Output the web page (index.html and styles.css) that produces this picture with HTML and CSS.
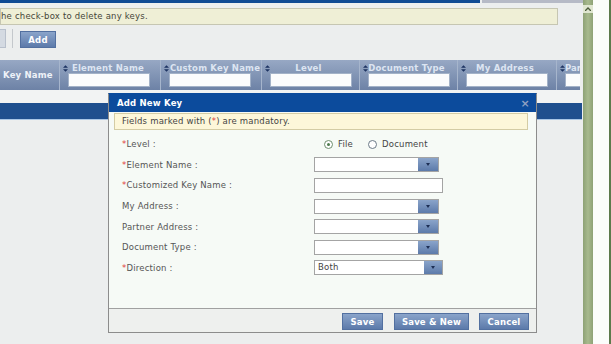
FILE: index.html
```html
<!DOCTYPE html>
<html lang="en">
<head>
    <meta charset="UTF-8">
    <meta name="viewport" content="width=device-width, initial-scale=1.0">
    <title>Keys</title>
    <link rel="stylesheet" href="styles.css">
</head>
<body>
    <div class="screen">
        <div class="main">
            <div class="topbar">
                <div class="topbar-blue"></div>
                <div class="topbar-gray"></div>
            </div>

            <div class="notice">he check-box to delete any keys.</div>

            <div class="toolbar">
                <span class="search-stub"></span>
                <span class="sep"></span>
                <button class="btn btn-add">Add</button>
            </div>

            <div class="grid-head">
                <div class="col col-key">Key Name</div>
                <div class="col w101">
                    <div class="col-title"><svg class="sort" viewBox="0 0 6 8"><path d="M3 0L6 3H0z M3 8L0 5H6z"/></svg><span>Element Name</span></div>
                    <input class="filter">
                </div>
                <div class="col w101">
                    <div class="col-title"><svg class="sort" viewBox="0 0 6 8"><path d="M3 0L6 3H0z M3 8L0 5H6z"/></svg><span class="tight">Custom Key Name</span></div>
                    <input class="filter">
                </div>
                <div class="col w98">
                    <div class="col-title"><svg class="sort" viewBox="0 0 6 8"><path d="M3 0L6 3H0z M3 8L0 5H6z"/></svg><span>Level</span></div>
                    <input class="filter">
                </div>
                <div class="col w98">
                    <div class="col-title"><svg class="sort" viewBox="0 0 6 8"><path d="M3 0L6 3H0z M3 8L0 5H6z"/></svg><span>Document Type</span></div>
                    <input class="filter">
                </div>
                <div class="col w99">
                    <div class="col-title"><svg class="sort" viewBox="0 0 6 8"><path d="M3 0L6 3H0z M3 8L0 5H6z"/></svg><span>My Address</span></div>
                    <input class="filter">
                </div>
                <div class="col col-last">
                    <div class="col-title"><svg class="sort" viewBox="0 0 6 8"><path d="M3 0L6 3H0z M3 8L0 5H6z"/></svg><span class="left">Par</span></div>
                    <input class="filter">
                </div>
            </div>

            <div class="grid-row"></div>
            <div class="grid-row selected"></div>
        </div>

        <div class="vscroll">
            <span class="arrow"><svg viewBox="0 0 6 4"><path d="M0 4L3 1L6 4" fill="none" stroke="#4a5a3a" stroke-width="1.4"/></svg></span>
        </div>
        <div class="gutter"></div>
        <div class="edge"></div>
    </div>

    <div class="modal">
        <div class="modal-head">
            <span>Add New Key</span>
            <span class="close">&#215;</span>
        </div>
        <div class="modal-note">Fields marked with (<span class="req">*</span>) are mandatory.</div>

        <div class="form">
            <label><span class="req">*</span>Level :</label>
            <div class="radios">
                <span class="radio checked"></span><span class="radio-text">File</span>
                <span class="radio second"></span><span class="radio-text">Document</span>
            </div>

            <label><span class="req">*</span>Element Name :</label>
            <div class="select"><span class="select-value"></span><span class="select-btn"></span></div>

            <label><span class="req">*</span>Customized Key Name :</label>
            <input class="text-input">

            <label>My Address :</label>
            <div class="select"><span class="select-value"></span><span class="select-btn"></span></div>

            <label>Partner Address :</label>
            <div class="select"><span class="select-value"></span><span class="select-btn"></span></div>

            <label>Document Type :</label>
            <div class="select"><span class="select-value"></span><span class="select-btn"></span></div>

            <label><span class="req">*</span>Direction :</label>
            <div class="select select-wide"><span class="select-value">Both</span><span class="select-btn"></span></div>
        </div>

        <div class="modal-foot">
            <button class="btn btn-save">Save</button>
            <button class="btn btn-savenew">Save &amp; New</button>
            <button class="btn btn-cancel">Cancel</button>
        </div>
    </div>
</body>
</html>
```

FILE: styles.css
```css
* {
    box-sizing: border-box;
}

body {
    margin: 0;
    font-family: "DejaVu Sans", Verdana, sans-serif;
    font-size: 8.5px;
    letter-spacing: 0.2px;
    color: #444;
    background: #eceeee;
    overflow: hidden;
}

.screen {
    display: flex;
    height: 344px;
}

.main {
    width: 583px;
}

.topbar {
    display: flex;
    gap: 2px;
    height: 3px;
}

.topbar-blue {
    width: 480px;
    background: #0f4a94;
}

.topbar-gray {
    flex: 1;
    background: #b6bac6;
}

.notice {
    margin-top: 5px;
    width: 558px;
    height: 17px;
    border: 1px solid #c6c6b2;
    background: #efefd6;
    line-height: 15px;
    color: #46463a;
    white-space: nowrap;
}

.toolbar {
    display: flex;
    height: 19px;
    margin-top: 4px;
}

.search-stub {
    width: 6px;
    background: #d4dae2;
    border: 1px solid #b8c0cc;
    border-left: none;
}

.sep {
    width: 1px;
    margin-left: 6px;
    background: #c4c8cc;
}

.btn {
    height: 17px;
    padding: 0;
    border: 1px solid #5270a0;
    background: linear-gradient(#8aa4ca, #5c7aaa);
    color: #fff;
    font-family: "DejaVu Sans", Verdana, sans-serif;
    font-size: 8.5px;
    letter-spacing: 0.2px;
    font-weight: bold;
}

.btn-add {
    width: 36px;
    margin: 2px 0 0 7px;
}

.grid-head {
    display: flex;
    width: 580px;
    height: 30px;
    margin-top: 12px;
    background: linear-gradient(#97a8c4, #6d82a6);
    overflow: hidden;
}

.col {
    flex: none;
    height: 30px;
    padding-top: 3px;
    border-left: 1px solid #a6b5cc;
    color: #dde5f2;
    font-weight: bold;
}

.col-key {
    width: 59px;
    border-left: none;
    display: flex;
    align-items: center;
    padding: 0 0 0 3px;
    color: #eef2f8;
}

.w101 { width: 101px; }
.w98 { width: 98px; }
.w99 { width: 99px; }
.col-last { flex: 1; }

.col-title {
    display: flex;
    align-items: center;
    height: 10px;
    line-height: 10px;
}

.col-title span {
    flex: 1;
    padding-right: 12px;
    text-align: center;
    white-space: nowrap;
    overflow: hidden;
}

.col-title span.tight {
    padding-right: 0;
    overflow: visible;
}

.col-title span.left {
    text-align: left;
    padding: 0;
    letter-spacing: 0;
}

.sort {
    flex: none;
    width: 5px;
    height: 7px;
    margin-left: 3px;
    fill: #1d3362;
}

.filter {
    display: block;
    width: 82px;
    height: 14px;
    margin-left: 8px;
    border: 1px solid #a3b2c8;
    background: #fbfcfd;
}

.grid-row {
    width: 582px;
    height: 13px;
    background: #f2f3f3;
}

.grid-row.selected {
    height: 17px;
    background: #1f4f8e;
    border-bottom: 1px solid #a9c6e6;
}

.vscroll {
    width: 10px;
    padding-top: 5px;
    background: linear-gradient(90deg, #8ea276, #a8ba8e 50%, #8ea276);
}

.arrow {
    display: flex;
    justify-content: center;
    align-items: center;
    height: 8px;
    background: #dfe6d0;
}

.arrow svg {
    width: 6px;
    height: 4px;
}

.gutter {
    width: 16px;
    background: #fbfdfb;
}

.edge {
    flex: 1;
    background: #5c7a4c;
}

/* dialog */
.modal {
    position: absolute;
    left: 108px;
    top: 93px;
    width: 429px;
    height: 240px;
    display: flex;
    flex-direction: column;
    border: 1px solid #8c8c8c;
    border-top-color: #0c4b9c;
    background: #f6faf6;
}

.modal-head {
    display: flex;
    justify-content: space-between;
    align-items: center;
    height: 18px;
    padding: 0 6px 0 8px;
    background: #0c4b9c;
    color: #fff;
    font-weight: bold;
}

.close {
    color: #8fa0c2;
    font-size: 11px;
    font-weight: bold;
}

.modal-note {
    height: 17px;
    margin: 1px 8px 0 5px;
    padding-left: 7px;
    border: 1px solid #d4cca4;
    background: #fdf7d9;
    line-height: 15px;
    color: #444;
}

.req {
    color: #e03c3c;
}

.form {
    display: grid;
    grid-template-columns: 192px 1fr;
    grid-auto-rows: 20.6px;
    align-items: center;
    margin-top: 4px;
    padding-left: 13px;
}

.form label {
    color: #555;
}

.radios {
    display: flex;
    align-items: center;
    padding-left: 10px;
}

.radio {
    width: 9px;
    height: 9px;
    border: 1px solid #6c7a88;
    border-radius: 50%;
    background: #fff;
}

.radio.checked {
    border-color: #6e8e6e;
    display: flex;
    align-items: center;
    justify-content: center;
}

.radio.checked::after {
    content: "";
    width: 3px;
    height: 3px;
    border-radius: 50%;
    background: #4e7a4e;
}

.radio.second {
    margin-left: 15px;
}

.radio-text {
    margin-left: 5px;
    color: #444;
}

.select {
    display: flex;
    width: 125px;
    height: 15px;
    border: 1px solid #a4a4a4;
    background: #fff;
}

.select-wide {
    width: 129px;
}

.select-value {
    flex: 1;
    padding-left: 3px;
    line-height: 13px;
    color: #444;
}

.select-btn {
    display: flex;
    align-items: center;
    justify-content: center;
    width: 20px;
    background: linear-gradient(#8aa4ca, #5c7aaa);
}

.select-wide .select-btn {
    width: 18px;
}

.select-btn::after {
    content: "";
    border-left: 2.5px solid transparent;
    border-right: 2.5px solid transparent;
    border-top: 3px solid #1d2f55;
}

.text-input {
    width: 129px;
    height: 15px;
    border: 1px solid #a4a4a4;
    background: #fff;
}

.modal-foot {
    display: flex;
    justify-content: flex-end;
    align-items: flex-start;
    height: 24px;
    margin-top: auto;
    padding: 4px 7px 0 0;
    border-top: 1px solid #a0a0a0;
    background: #eef0ee;
}

.btn-save {
    width: 41px;
}

.btn-savenew {
    width: 75px;
    margin-left: 11px;
}

.btn-cancel {
    width: 50px;
    margin-left: 10px;
}
```
